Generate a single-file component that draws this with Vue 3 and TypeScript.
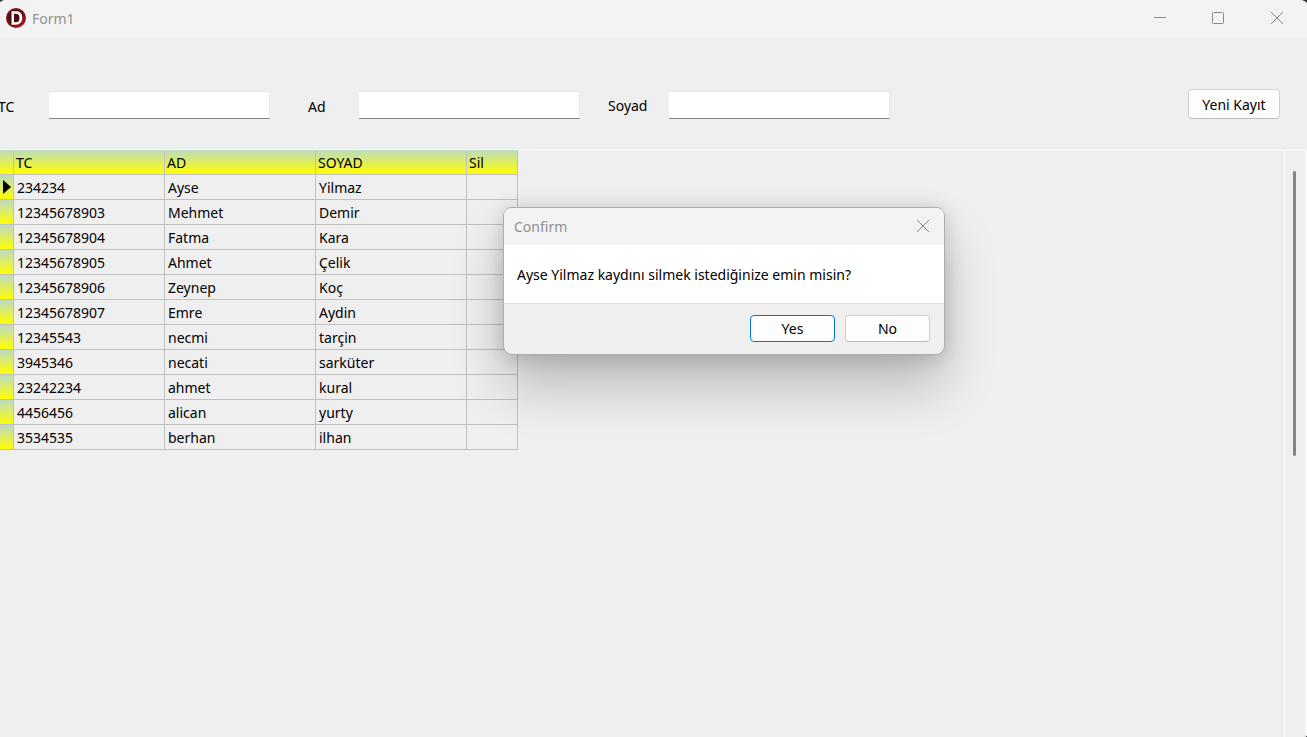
<script setup lang="ts">
import { ref } from 'vue'

interface Person {
  tc: string
  ad: string
  soyad: string
}

const people = ref<Person[]>([
  { tc: '234234', ad: 'Ayse', soyad: 'Yilmaz' },
  { tc: '12345678903', ad: 'Mehmet', soyad: 'Demir' },
  { tc: '12345678904', ad: 'Fatma', soyad: 'Kara' },
  { tc: '12345678905', ad: 'Ahmet', soyad: 'Çelik' },
  { tc: '12345678906', ad: 'Zeynep', soyad: 'Koç' },
  { tc: '12345678907', ad: 'Emre', soyad: 'Aydin' },
  { tc: '12345543', ad: 'necmi', soyad: 'tarçin' },
  { tc: '3945346', ad: 'necati', soyad: 'sarküter' },
  { tc: '23242234', ad: 'ahmet', soyad: 'kural' },
  { tc: '4456456', ad: 'alican', soyad: 'yurty' },
  { tc: '3534535', ad: 'berhan', soyad: 'ilhan' },
])

const tc = ref('')
const ad = ref('')
const soyad = ref('')
const selected = ref(0)
const confirmOpen = ref(true)

function removeSelected(): void {
  people.value.splice(selected.value, 1)
  selected.value = 0
  confirmOpen.value = false
}

function askRemove(index: number): void {
  selected.value = index
  confirmOpen.value = true
}
</script>

<template>
  <div class="window">
    <header class="titlebar">
      <svg class="logo" viewBox="0 0 20 20" aria-hidden="true">
        <defs>
          <linearGradient id="logo-ring" x1="0" y1="0" x2="1" y2="1">
            <stop offset="0" stop-color="#6e1a22" />
            <stop offset="0.5" stop-color="#7a0c12" />
            <stop offset="1" stop-color="#c2151a" />
          </linearGradient>
        </defs>
        <circle cx="10" cy="10" r="10" fill="url(#logo-ring)" />
        <circle cx="9.5" cy="9.5" r="7.5" fill="#4a0d14" />
        <path
          d="M5.500 3.300h4.500c4 0 6.300 2.500 6.300 6.500s-2.300 7-6.300 7H5.500zM8 5.800v8.500h1.800c2.500 0 3.700-1.500 3.700-4.400s-1.200-4.100-3.700-4.100z"
          fill="#fff"
          fill-rule="evenodd"
        />
      </svg>
      <h1 class="caption">Form1</h1>
      <button class="sysbtn" type="button" aria-label="Minimize">
        <svg viewBox="0 0 14 14"><path d="M1 6.500h12" /></svg>
      </button>
      <button class="sysbtn" type="button" aria-label="Maximize">
        <svg viewBox="0 0 14 14"><rect x="1.500" y="1.500" width="11" height="11" rx="1" /></svg>
      </button>
      <button class="sysbtn close" type="button" aria-label="Close">
        <svg viewBox="0 0 14 14"><path d="M1 1l12 12M13 1L1 13" /></svg>
      </button>
    </header>

    <form class="toolbar" @submit.prevent>
      <label class="label-tc" for="tc">TC</label>
      <input id="tc" v-model="tc" class="edit" type="text" />
      <label class="label-ad" for="ad">Ad</label>
      <input id="ad" v-model="ad" class="edit" type="text" />
      <label class="label-soyad" for="soyad">Soyad</label>
      <input id="soyad" v-model="soyad" class="edit" type="text" />
      <button class="btn new-record" type="button">Yeni Kayıt</button>
    </form>

    <main class="content">
      <div class="grid-area">
        <table class="grid">
          <colgroup>
            <col class="col-mark" />
            <col class="col-text" />
            <col class="col-text" />
            <col class="col-text" />
            <col class="col-sil" />
          </colgroup>
          <thead>
            <tr>
              <th></th>
              <th scope="col">TC</th>
              <th scope="col">AD</th>
              <th scope="col">SOYAD</th>
              <th scope="col">Sil</th>
            </tr>
          </thead>
          <tbody>
            <tr v-for="(p, i) in people" :key="p.tc" @click="selected = i">
              <td class="mark">
                <svg v-if="i === selected" viewBox="0 0 8 14" aria-hidden="true">
                  <path d="M0 0v14L8 7z" />
                </svg>
              </td>
              <td>{{ p.tc }}</td>
              <td>{{ p.ad }}</td>
              <td>{{ p.soyad }}</td>
              <td @click="askRemove(i)"></td>
            </tr>
          </tbody>
        </table>
      </div>
      <div class="scrollbar"><div class="thumb"></div></div>
    </main>

    <section v-if="confirmOpen" class="dialog" role="dialog" aria-labelledby="confirm-title">
      <header class="dialog-title">
        <h2 id="confirm-title" class="caption">Confirm</h2>
        <button class="dialog-close" type="button" aria-label="Close dialog" @click="confirmOpen = false">
          <svg viewBox="0 0 14 14"><path d="M1 1l12 12M13 1L1 13" /></svg>
        </button>
      </header>
      <p class="message">Ayse Yilmaz kaydını silmek istediğinize emin misin?</p>
      <footer class="actions">
        <button class="btn answer default" type="button" @click="removeSelected">Yes</button>
        <button class="btn answer" type="button" @click="confirmOpen = false">No</button>
      </footer>
    </section>
  </div>
</template>

<style>
body {
  margin: 0;
  background: #303030;
}
</style>

<style scoped>
.window {
  position: relative;
  display: flex;
  flex-direction: column;
  box-sizing: border-box;
  min-height: 100vh;
  overflow: hidden;
  background: #efefef;
  border-radius: 6px 8px 3px 0 / 3px 4px 3px 0;
  color: #000;
  font-family: 'Noto Sans', 'Open Sans', sans-serif;
  font-size: 14px;
  line-height: 20px;
}

button,
input {
  box-sizing: border-box;
  margin: 0;
  font: inherit;
  color: inherit;
}

.titlebar,
.dialog-title {
  display: flex;
  align-items: center;
  box-sizing: border-box;
  height: 37px;
  padding-bottom: 1px;
  background: #f3f3f3;
}

.titlebar {
  padding-left: 6px;
}

.logo {
  width: 20px;
  height: 20px;
  margin-right: 6px;
}

.caption {
  flex: 1;
  margin: 0;
  padding-top: 2px;
  font-size: 14px;
  font-weight: 400;
  color: #919191;
}

.sysbtn,
.dialog-close {
  display: flex;
  align-items: center;
  justify-content: center;
  height: 36px;
  padding: 0;
  border: 0;
  background: none;
}

.sysbtn {
  width: 58px;
}

.sysbtn.close {
  width: 60px;
}

.sysbtn svg,
.dialog-close svg {
  width: 14px;
  height: 14px;
  fill: none;
  stroke: #8a8a8a;
  stroke-width: 1;
}

.toolbar {
  display: flex;
  align-items: flex-start;
  box-sizing: border-box;
  height: 111px;
  padding: 52px 27px 0 0;
}

.toolbar label {
  flex: none;
  padding-top: 8px;
}

.toolbar .label-tc {
  width: 51px;
  margin-left: -2px;
}

.toolbar .label-ad {
  width: 51px;
  padding-left: 38px;
}

.toolbar .label-soyad {
  width: 61px;
  padding-top: 7px;
  padding-left: 28px;
}

.edit {
  width: 221px;
  height: 28px;
  margin-top: 2px;
  padding: 0 6px;
  border: 1px solid #e6e6e6;
  border-left-width: 0;
  border-bottom-color: #858585;
  background: #fff;
  outline: none;
}

.btn {
  padding: 0;
  border: 1px solid #d0d0d0;
  border-bottom-color: #bdbdbd;
  border-radius: 4px;
  background: #fdfdfd;
}

.new-record {
  width: 92px;
  height: 30px;
  margin-left: auto;
  padding-top: 2px;
}

.content {
  display: flex;
  flex: 1;
  border-top: 1px solid #e6e6e6;
  border-right: 2px solid #f9f9f9;
  box-shadow: inset 0 1px #fff;
}

.grid-area {
  flex: 1;
  padding-top: 1px;
}

.grid {
  width: 518px;
  table-layout: fixed;
  border-collapse: separate;
  border-spacing: 0;
}

.col-mark {
  width: 14px;
}

.col-text {
  width: 151px;
}

.col-sil {
  width: 51px;
}

.grid th,
.grid td {
  box-sizing: border-box;
  height: 25px;
  padding: 2px 0 0 3px;
  border-right: 1px solid #c0c0c0;
  border-bottom: 1px solid #c0c0c0;
  text-align: left;
  font-weight: 400;
}

.grid th {
  padding-left: 2px;
  background: linear-gradient(#bcdcc0, #ffff00);
}

.grid .mark {
  padding: 0 0 0 3px;
  background: linear-gradient(#bcdac6, #ffff00);
}

.mark svg {
  display: block;
  width: 8px;
  height: 14px;
}

.scrollbar {
  display: flex;
  flex-direction: column;
  align-items: center;
  box-sizing: border-box;
  width: 21px;
  padding: 22px 1px 0 0;
  border-left: 1px solid #fff;
}

.thumb {
  width: 3px;
  height: 285px;
  border-radius: 2px;
  background: #858585;
}

.dialog {
  position: absolute;
  top: 207px;
  left: 503px;
  width: 440px;
  border: 1px solid #adadad;
  border-radius: 9px;
  background: #efefef;
  background-clip: padding-box;
  box-shadow: 0 32px 52px rgba(0, 0, 0, 0.22), 0 2px 20px rgba(0, 0, 0, 0.16);
}

.dialog-title {
  padding-left: 10px;
  border-radius: 8px 8px 0 0;
}

.dialog-close {
  width: 42px;
}

.message {
  margin: 0;
  padding: 20px 13px 18px;
  border-bottom: 1px solid #dfdfdf;
  background: #fff;
}

.actions {
  display: flex;
  justify-content: flex-end;
  gap: 10px;
  padding: 11px 14px 12px;
}

.answer {
  width: 85px;
  height: 27px;
}

.default {
  border-color: #0078d4;
}
</style>
